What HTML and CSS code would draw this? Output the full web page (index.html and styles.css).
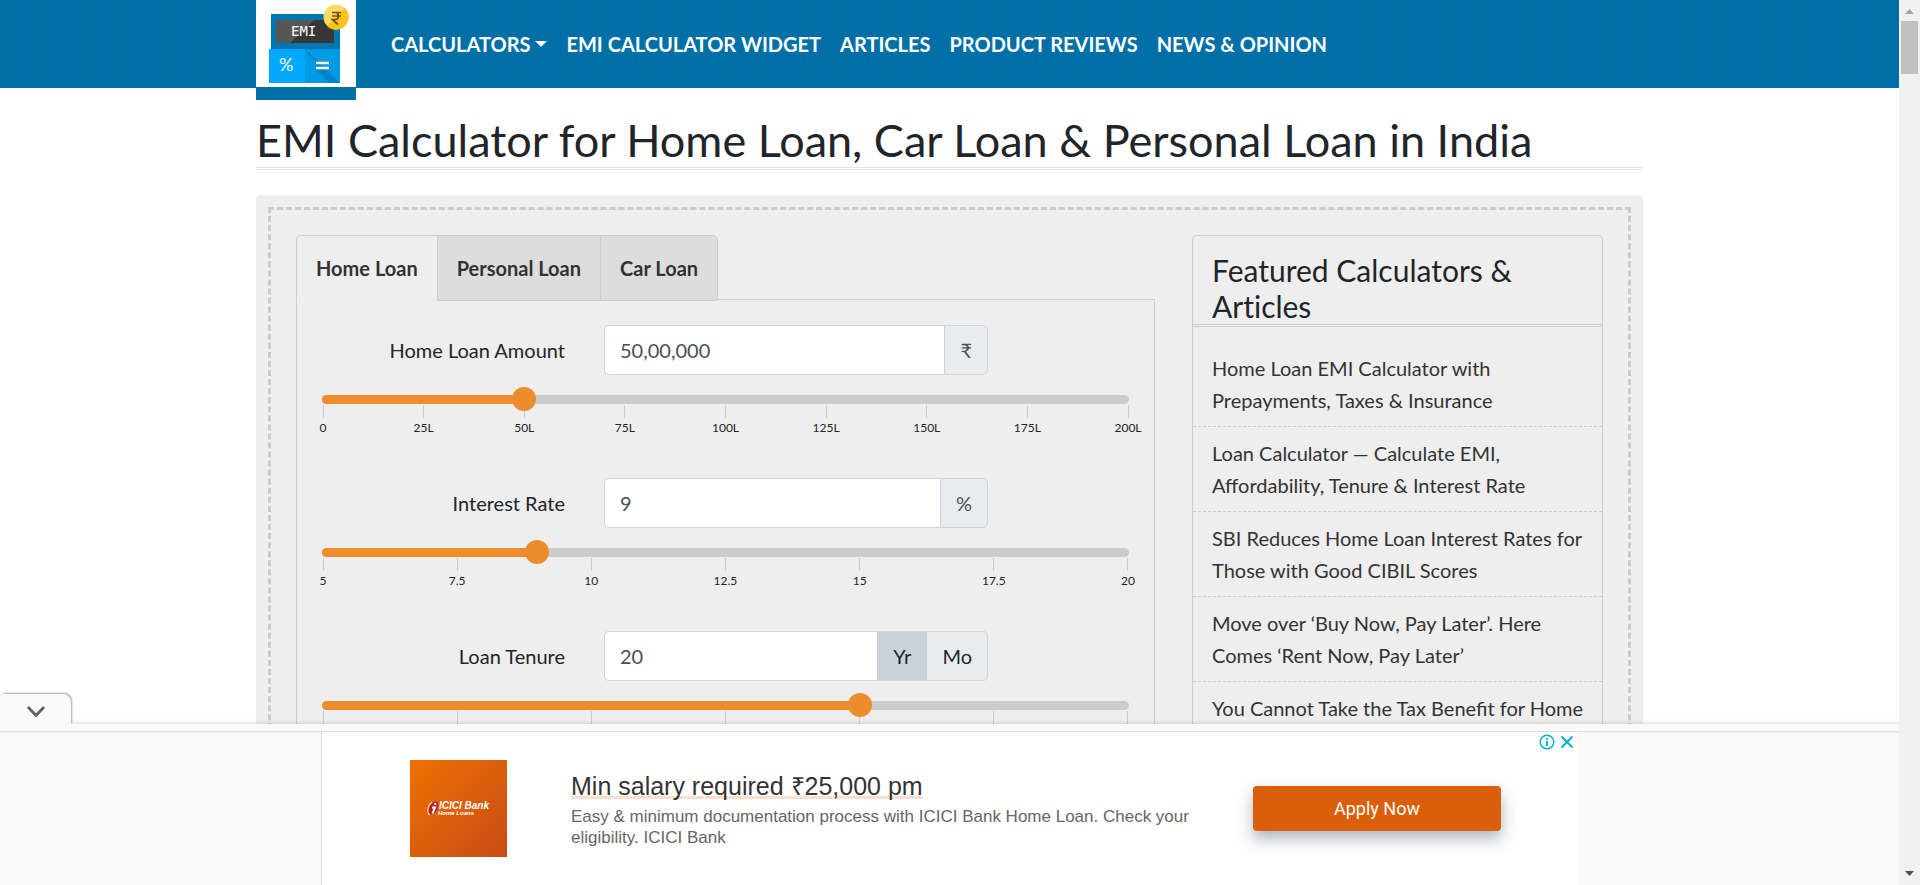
FILE: index.html
```html
<!DOCTYPE html>
<html lang="en">
<head>
<meta charset="utf-8">
<meta name="viewport" content="width=device-width, initial-scale=1">
<title>EMI Calculator for Home Loan, Car Loan &amp; Personal Loan in India</title>
<link rel="stylesheet" href="styles.css">
</head>
<body>
<div class="page">
  <header class="site-header">
    <div class="container header-row">
      <a class="brand" href="#" aria-label="EMI Calculator home">
        <svg class="brand-logo" viewBox="0 0 100 87" aria-hidden="true">
          <rect x="15" y="14" width="69" height="37" fill="#0076b0"/>
          <rect x="20" y="20" width="58" height="23" fill="#565656"/>
          <path d="M34 43 58 20H78V43Z" fill="#373737"/>
          <rect x="13" y="49" width="36" height="34" fill="#00a9ff"/>
          <rect x="49" y="49" width="35" height="34" fill="#009be5"/>
          <path d="M49 49 84 83H49Z" fill="#0083c4"/>
          <path d="M49 83V51L60 62V70L73 83Z" fill="#009be5"/>
          <path d="M60 63H73M60 68H73" stroke="#fff" stroke-width="2.4"/>
          <circle cx="80" cy="17" r="12.5" fill="#fbdc63"/>
          <path d="M89 8A12.500 12.500 0 0 1 71 26Z" fill="#fcc21c"/>
          <path d="M76 12.500H85M76 16H85M76 12.500H79C83.500 12.500 83.500 19.500 79 19.500H76.500L82 24.500" fill="none" stroke="#7a4a12" stroke-width="1.700"/>
          <text class="logo-screen" x="35" y="36">EMI</text>
          <text class="logo-key" x="23" y="71">%</text>
        </svg>
      </a>
      <nav class="main-nav" aria-label="Main">
        <a href="#" class="has-menu">CALCULATORS</a>
        <a href="#">EMI CALCULATOR WIDGET</a>
        <a href="#">ARTICLES</a>
        <a href="#">PRODUCT REVIEWS</a>
        <a href="#">NEWS &amp; OPINION</a>
      </nav>
    </div>
  </header>

  <main class="container">
    <h1 class="page-title">EMI Calculator for Home Loan, Car Loan &amp; Personal Loan in India</h1>
    <div class="panel">
      <div class="panel-inner">
        <section class="calculator">
          <div class="tabs" role="tablist">
            <button type="button" class="tab tab-active" role="tab" aria-selected="true">Home Loan</button>
            <button type="button" class="tab" role="tab" aria-selected="false">Personal Loan</button>
            <button type="button" class="tab" role="tab" aria-selected="false">Car Loan</button>
          </div>
          <form class="loan-form">
            <div class="field">
              <div class="field-row">
                <label for="amount">Home Loan Amount</label>
                <div class="input-group">
                  <input id="amount" type="text" value="50,00,000">
                  <span class="addon">₹</span>
                </div>
              </div>
              <div class="slider">
                <div class="track"><div class="fill" style="width:25%"></div></div>
                <input type="range" min="0" max="200" value="50" aria-label="Home Loan Amount slider">
              </div>
              <ul class="ticks"><li>0</li><li>25L</li><li>50L</li><li>75L</li><li>100L</li><li>125L</li><li>150L</li><li>175L</li><li>200L</li></ul>
            </div>
            <div class="field">
              <div class="field-row">
                <label for="rate">Interest Rate</label>
                <div class="input-group">
                  <input id="rate" type="text" value="9">
                  <span class="addon">%</span>
                </div>
              </div>
              <div class="slider">
                <div class="track"><div class="fill" style="width:26.67%"></div></div>
                <input type="range" min="5" max="20" step="0.25" value="9" aria-label="Interest Rate slider">
              </div>
              <ul class="ticks"><li>5</li><li>7.5</li><li>10</li><li>12.5</li><li>15</li><li>17.5</li><li>20</li></ul>
            </div>
            <div class="field">
              <div class="field-row">
                <label for="tenure">Loan Tenure</label>
                <div class="input-group">
                  <input id="tenure" type="text" value="20">
                  <button type="button" class="unit unit-active" aria-pressed="true">Yr</button>
                  <button type="button" class="unit" aria-pressed="false">Mo</button>
                </div>
              </div>
              <div class="slider">
                <div class="track"><div class="fill" style="width:66.67%"></div></div>
                <input type="range" min="0" max="30" step="0.5" value="20" aria-label="Loan Tenure slider">
              </div>
              <ul class="ticks"><li>0</li><li>5</li><li>10</li><li>15</li><li>20</li><li>25</li><li>30</li></ul>
            </div>
          </form>
        </section>

        <aside class="featured">
          <h2>Featured Calculators &amp; Articles</h2>
          <ul class="featured-list">
            <li><a href="#">Home Loan EMI Calculator with Prepayments, Taxes &amp; Insurance</a></li>
            <li><a href="#">Loan Calculator — Calculate EMI, Affordability, Tenure &amp; Interest Rate</a></li>
            <li><a href="#">SBI Reduces Home Loan Interest Rates for Those with Good CIBIL Scores</a></li>
            <li><a href="#">Move over ‘Buy Now, Pay Later’. Here Comes ‘Rent Now, Pay Later’</a></li>
            <li><a href="#">You Cannot Take the Tax Benefit for Home</a></li>
          </ul>
        </aside>
      </div>
    </div>
  </main>

  <div class="ad-dock">
    <button type="button" class="ad-toggle" aria-label="Hide advertisement">
      <svg viewBox="0 0 20 14" aria-hidden="true"><path d="M2 2 10 10.500 18 2" fill="none" stroke="#616161" stroke-width="2.800"/></svg>
    </button>
    <div class="ad-strip"></div>
    <div class="ad-row">
      <section class="ad" aria-label="Advertisement">
        <div class="ad-choices">
          <button type="button" aria-label="Why this ad">
            <svg viewBox="0 0 16 16" aria-hidden="true"><circle cx="8" cy="8" r="6.800" fill="none" stroke="#00aecd" stroke-width="1.400"/><path d="M8 7V12M8 4V5.700" stroke="#00aecd" stroke-width="1.800"/></svg>
          </button>
          <button type="button" aria-label="Close ad">
            <svg viewBox="0 0 16 16" aria-hidden="true"><path d="M2.500 2.500 13.500 13.500M13.500 2.500 2.500 13.500" stroke="#00aecd" stroke-width="1.800"/></svg>
          </button>
        </div>
        <svg class="ad-logo" viewBox="0 0 97 97" role="img" aria-label="ICICI Bank Home Loans">
          <defs><linearGradient id="adg" x1="0" y1="0" x2="1" y2="1"><stop offset="0" stop-color="#ed7100"/><stop offset="1" stop-color="#c94b18"/></linearGradient></defs>
          <rect width="97" height="97" fill="url(#adg)"/>
          <ellipse cx="23.500" cy="48" rx="4" ry="7" transform="rotate(28 23.500 48)" fill="#b01f2e"/>
          <path d="M22 42C17 46 16.500 53 20 55" fill="none" stroke="#f4d2b8" stroke-width="1.200"/>
          <path d="M25 43 25.500 45M22 47.500H25L22.500 53.500" fill="none" stroke="#fff" stroke-width="2"/>
          <text class="ad-logo-name" x="29" y="49">ICICI Bank</text>
          <text class="ad-logo-sub" x="28" y="55">Home Loans</text>
        </svg>
        <div class="ad-copy">
          <a class="ad-title" href="#">Min salary required ₹25,000 pm</a>
          <p>Easy &amp; minimum documentation process with ICICI Bank Home Loan. Check your eligibility. ICICI Bank</p>
        </div>
        <button type="button" class="ad-cta">Apply Now</button>
      </section>
    </div>
  </div>
</div>
<div class="scrollbar" aria-hidden="true">
  <svg viewBox="0 0 9 5"><path d="M0 5 4.500 0 9 5Z" fill="#a3a3a3"/></svg>
  <div class="scroll-thumb"></div>
  <svg viewBox="0 0 9 5"><path d="M0 0 4.500 5 9 0Z" fill="#505050"/></svg>
</div>
</body>
</html>
```
FILE: styles.css
```css
* { box-sizing: border-box; }

body {
  margin: 0;
  height: 100vh;
  display: flex;
  overflow: hidden;
  background: #fff;
  color: #212529;
  font: 20px/30px Lato, sans-serif;
}

button, input { font: inherit; color: inherit; margin: 0; }
button { cursor: pointer; }
ul { list-style: none; margin: 0; padding: 0; }
a { color: inherit; text-decoration: none; }

.page { position: relative; flex: 1; min-width: 0; overflow: hidden; }
.container { width: 100%; max-width: 1387px; margin: 0 auto; }

/* Header */
.site-header {
  height: 88px;
  background: repeating-linear-gradient(90deg, #006fa6 0 3px, #0071a8 3px 5px);
}
.header-row { display: flex; align-items: flex-start; }
.brand {
  display: block;
  width: 100px;
  height: 100px;
  background: #0070a8;
}
.brand-logo { display: block; width: 100px; height: 87px; background: #fff; }
.logo-screen { font: 14px "DejaVu Sans Mono", monospace; fill: #fff; }
.logo-key { font: 18px Lato, sans-serif; fill: #fff; }
.main-nav {
  display: flex;
  gap: 19px;
  height: 88px;
  align-items: center;
  margin-left: 35px;
  color: #fff;
  font-weight: 700;
}
.has-menu { display: flex; align-items: center; gap: 5px; }
.has-menu::after {
  content: "";
  border: 6px solid transparent;
  border-top-color: #fff;
  border-bottom: 0;
}

/* Title and panel */
.page-title {
  margin: 25px 0;
  border-bottom: 3px double #e5e5e5;
  font-size: 45px;
  line-height: 54px;
  font-weight: 400;
}
.panel { padding: 12px; border-radius: 5px; background: #eee; }
.panel-inner {
  display: grid;
  grid-template-columns: minmax(0, 859fr) minmax(0, 411fr);
  gap: 37px;
  padding: 25px;
  border: 3px dashed #ccc;
}

/* Tabs */
.tabs { position: relative; display: flex; margin-bottom: -2px; }
.tab {
  padding: 17px 19px;
  border: 1px solid #ccc;
  border-right: 0;
  background: #ddd;
  color: #333;
  font-weight: 700;
}
.tab-active { background: #eee; border-bottom-color: #eee; }
.tab:first-child { border-top-left-radius: 5px; }
.tab:last-child { border-right: 1px solid #ccc; border-top-right-radius: 5px; }

/* Loan form */
.loan-form { padding: 25px; border: 1px solid #ccc; }
.field { margin-bottom: 42px; }
.field-row {
  display: grid;
  grid-template-columns: minmax(0, 243fr) minmax(0, 384fr) minmax(0, 102fr);
  gap: 39px;
  align-items: center;
}
.field-row label { text-align: right; }
.input-group { display: flex; height: 50px; color: #495057; }
.input-group input {
  flex: 1;
  min-width: 0;
  padding: 0 15px;
  border: 1px solid #ced4da;
  border-right: 0;
  border-radius: 5px 0 0 5px;
  background: #fff;
}
.addon, .unit {
  display: flex;
  align-items: center;
  padding: 0 15px;
  border: 1px solid #ced4da;
  background: #e9ecef;
}
.unit { border-left: 0; color: #212529; }
.unit-active { background: #cbd3da; border-left: 1px solid #ced4da; }
.addon:last-child, .unit:last-child { border-radius: 0 5px 5px 0; }

/* Track with the native range laid over it */
.slider {
  position: relative;
  z-index: 1;
  display: grid;
  height: 25px;
  margin-top: 12px;
  align-items: center;
}
.slider > * { grid-area: 1 / 1; }
.track { height: 9px; border-radius: 5px; background: #ccc; overflow: hidden; }
.fill { height: 100%; background: #ed8c2b; }
.slider input {
  -webkit-appearance: none;
  appearance: none;
  align-self: start;
  height: 24px;
  margin: 0 -12px;
  background: transparent;
}
.slider input::-webkit-slider-thumb {
  -webkit-appearance: none;
  width: 24px;
  height: 24px;
  border-radius: 50%;
  background: #ed8c2b;
}
.slider input::-moz-range-thumb {
  width: 24px;
  height: 24px;
  border: 0;
  border-radius: 50%;
  background: #ed8c2b;
}
.ticks {
  display: flex;
  justify-content: space-between;
  margin: -7px 1px 0;
  font-size: 12px;
  line-height: 16px;
}
.ticks li { display: flex; flex-direction: column; align-items: center; width: 0; }
.ticks li::before {
  content: "";
  width: 1px;
  height: 13px;
  margin-bottom: 2px;
  background: #ccc;
}

/* Featured */
.featured { border: 1px solid #ccc; border-radius: 5px 5px 0 0; }
.featured h2 {
  margin: 0 0 15px;
  padding: 16px 19px 0;
  border-bottom: 3px double #ccc;
  font-size: 30px;
  line-height: 36px;
  font-weight: 400;
  font-variant-ligatures: no-common-ligatures;
}
.featured-list { color: #333; line-height: 32px; }
.featured-list li { padding: 10px 12px 10px 19px; border-bottom: 1px dashed #ccc; }

/* Docked advertisement */
.ad-dock {
  position: absolute;
  z-index: 2;
  left: 0;
  right: 0;
  bottom: 0;
  background: #fafafa;
  box-shadow: 0 0 5px rgba(0, 0, 0, .2);
}
.ad-toggle {
  position: absolute;
  left: 0;
  bottom: 100%;
  display: flex;
  justify-content: center;
  align-items: center;
  width: 71px;
  height: 30px;
  padding: 6px 0 0;
  border: 0;
  border-radius: 5px 8px 0 0;
  background: #fafafa;
  box-shadow: 1px -1px 2px rgba(0, 0, 0, .35);
  clip-path: inset(-5px -5px 0 0);
}
.ad-toggle svg { width: 20px; height: 14px; }
.ad-strip { position: relative; height: 7px; box-shadow: 0 1px 2px rgba(0, 0, 0, .15); }
.ad-row { display: flex; justify-content: center; }
.ad {
  position: relative;
  display: flex;
  align-items: center;
  width: 100%;
  max-width: 1257px;
  height: 154px;
  padding: 0 77px 0 88px;
  border-left: 1px solid #ddd;
  border-top: 1px solid #ddd;
  background: #fff;
  font-family: "Liberation Sans", sans-serif;
}
.ad-choices { position: absolute; top: 2px; right: 3px; display: flex; gap: 4px; }
.ad-choices button { padding: 0; border: 0; background: none; width: 16px; height: 16px; }
.ad-choices svg { display: block; width: 16px; height: 16px; }
.ad-logo { width: 97px; height: 97px; }
.ad-logo-name { font: italic 700 10px "Liberation Sans", sans-serif; fill: #fff; }
.ad-logo-sub { font: italic 700 6px "Liberation Sans", sans-serif; fill: #fff; }
.ad-copy { flex: 1; margin-left: 64px; margin-right: 56px; padding-top: 3px; }
.ad-title {
  display: inline-block;
  color: #333;
  font-size: 25px;
  line-height: 26px;
  background: linear-gradient(#f9dfd0, #f9dfd0) bottom / 100% 3px no-repeat;
}
.ad-copy p { margin: 3px 0 0; color: #666; font-size: 17px; line-height: 21px; }
.ad-cta {
  width: 248px;
  height: 45px;
  border: 0;
  border-radius: 4px;
  background: #db5e0a;
  color: #fff;
  font: 400 18px Roboto, sans-serif;
  box-shadow: 0 8px 16px rgba(30, 40, 80, .35);
}

/* Scrollbar */
.scrollbar {
  display: flex;
  flex-direction: column;
  align-items: center;
  width: 21px;
  padding: 9px 0;
  background: #f1f1f1;
}
.scrollbar svg { width: 9px; height: 5px; }
.scroll-thumb { width: 17px; height: 53px; margin: 7px 0 auto; background: #c1c1c1; }
```
